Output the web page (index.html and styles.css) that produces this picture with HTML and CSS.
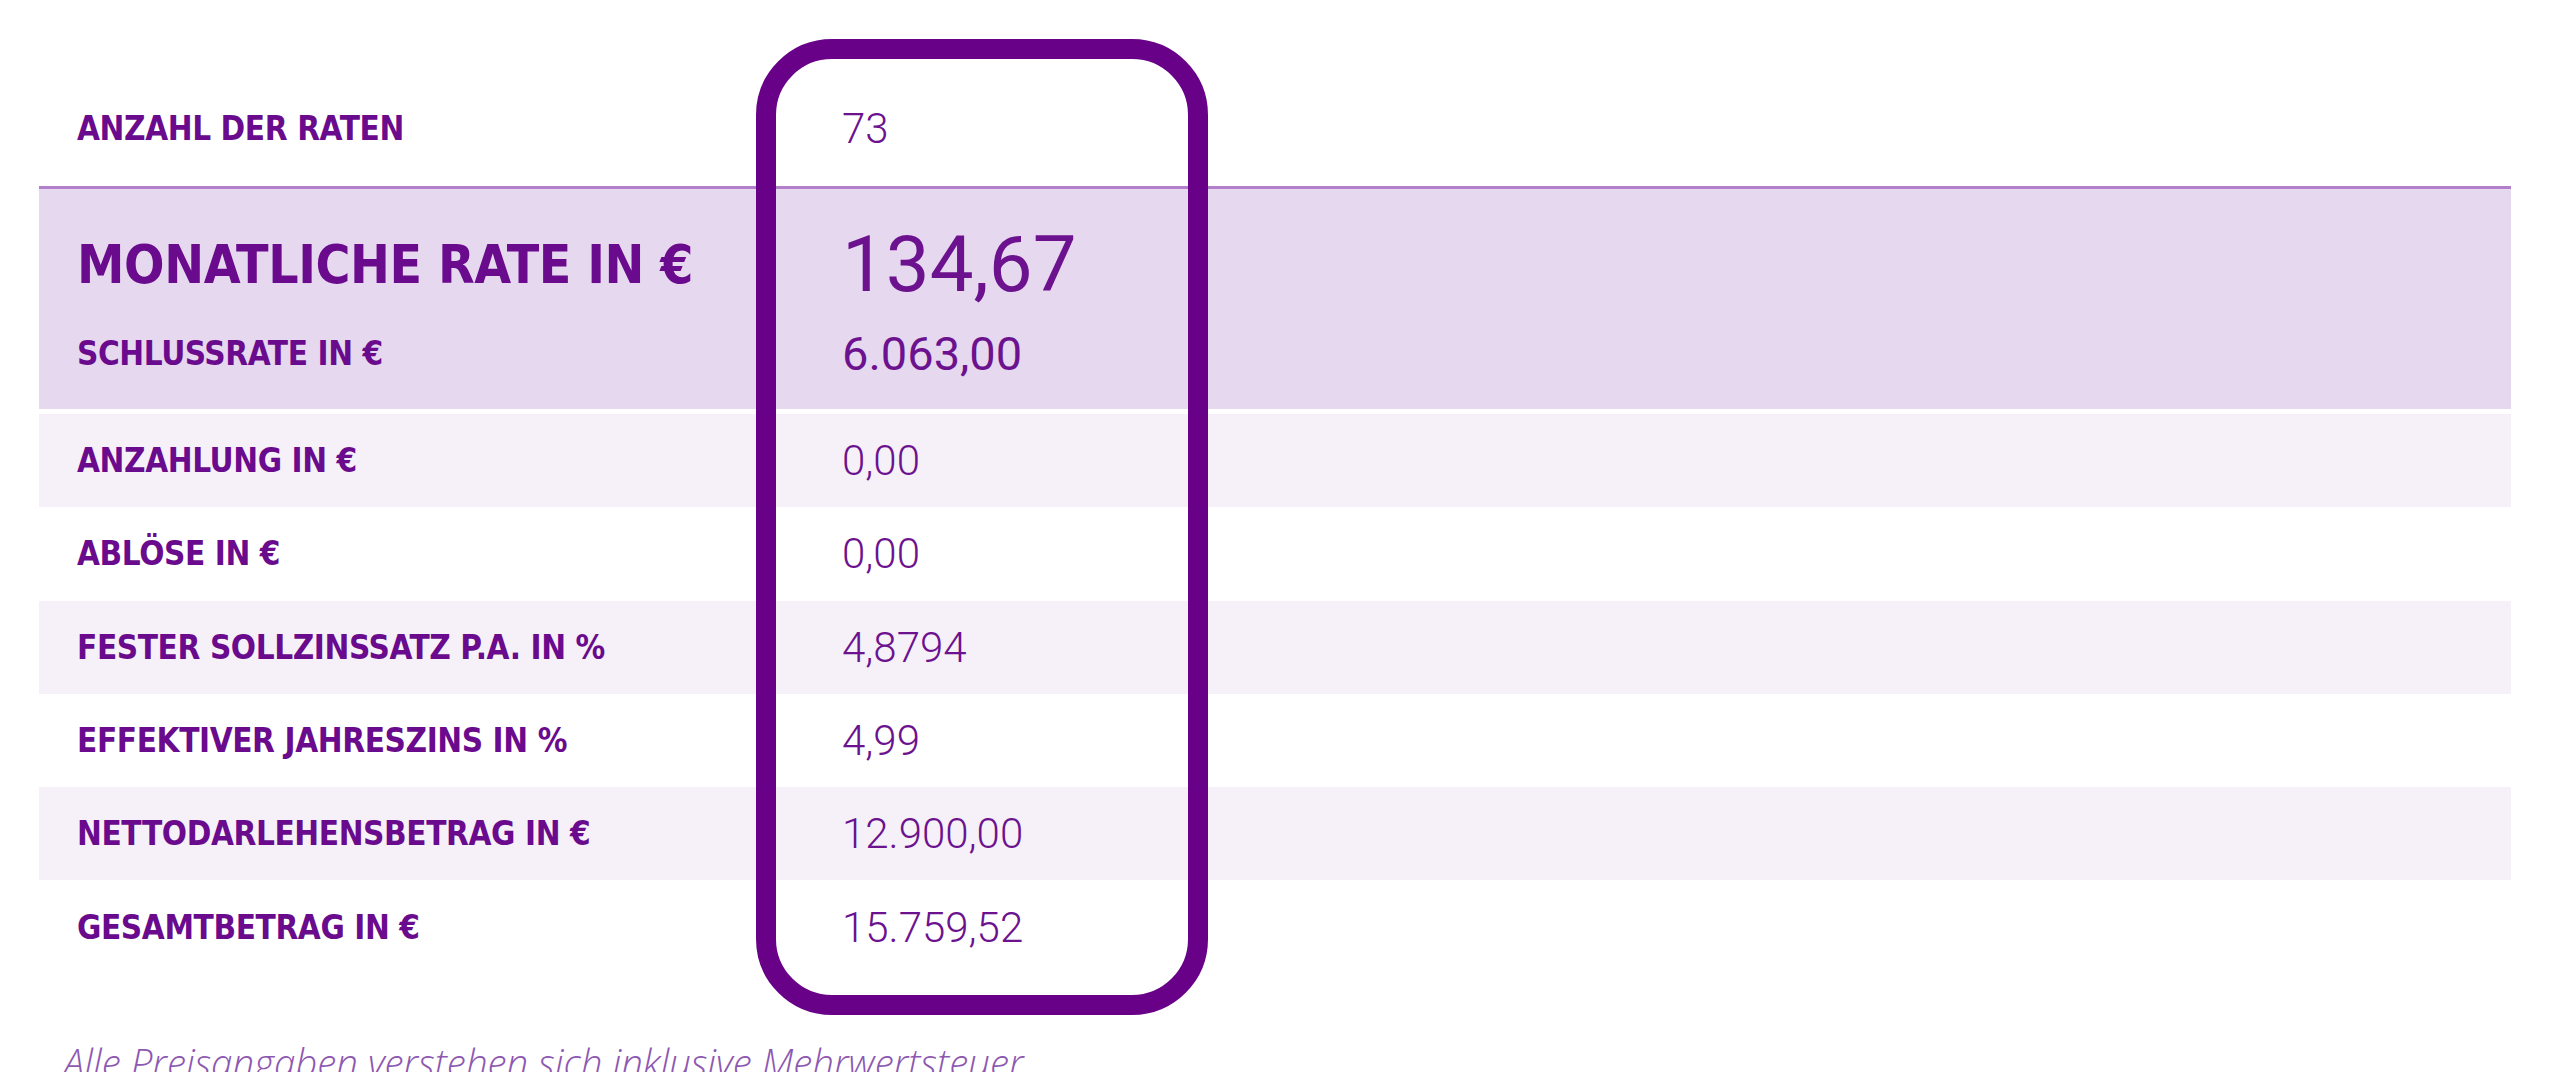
FILE: index.html
```html
<!DOCTYPE html>
<html lang="de">
<head>
<meta charset="utf-8">
<title>Finanzierung</title>
<link rel="stylesheet" href="styles.css">
</head>
<body>
<div class="calc">
  <div class="table">
    <div class="row row-first">
      <div class="label">ANZAHL DER RATEN</div>
      <div class="value">73</div>
    </div>
    <div class="highlight">
      <div class="hl-line">
        <div class="label label-big">MONATLICHE RATE IN €</div>
        <div class="value value-big">134,67</div>
      </div>
      <div class="hl-line">
        <div class="label">SCHLUSSRATE IN €</div>
        <div class="value value-mid">6.063,00</div>
      </div>
    </div>
    <div class="rows">
      <div class="row alt">
        <div class="label">ANZAHLUNG IN €</div>
        <div class="value">0,00</div>
      </div>
      <div class="row">
        <div class="label">ABLÖSE IN €</div>
        <div class="value">0,00</div>
      </div>
      <div class="row alt">
        <div class="label">FESTER SOLLZINSSATZ P.A. IN %</div>
        <div class="value">4,8794</div>
      </div>
      <div class="row">
        <div class="label">EFFEKTIVER JAHRESZINS IN %</div>
        <div class="value">4,99</div>
      </div>
      <div class="row alt">
        <div class="label">NETTODARLEHENSBETRAG IN €</div>
        <div class="value">12.900,00</div>
      </div>
      <div class="row">
        <div class="label">GESAMTBETRAG IN €</div>
        <div class="value">15.759,52</div>
      </div>
    </div>
  </div>
  <p class="note">Alle Preisangaben verstehen sich inklusive Mehrwertsteuer</p>
  <div class="focus-box"></div>
</div>
</body>
</html>
```

FILE: styles.css
```css
html, body {
  margin: 0;
  padding: 0;
  background: #ffffff;
}

body {
  width: 2560px;
  height: 1072px;
  overflow: hidden;
}

.calc {
  position: relative;
  padding: 70px 49px 0 39px;
}

.table {
  display: flex;
  flex-direction: column;
}

.row,
.hl-line {
  display: grid;
  grid-template-columns: 803px 1fr;
  align-items: center;
}

.row-first {
  height: 116px;
  border-bottom: 3px solid #b27fcb;
}

.highlight {
  background: #e6d8ef;
  height: 220px;
  display: flex;
  flex-direction: column;
  padding-top: 30px;
  box-sizing: border-box;
}

.hl-line:first-child {
  height: 86px;
}

.hl-line:last-child {
  height: 96px;
}

.rows {
  margin-top: 5px;
  display: flex;
  flex-direction: column;
}

.rows .row {
  height: 93.3px;
}

.row.alt {
  background: #f6f1f8;
}

.label {
  padding-left: 38px;
  font-family: "DejaVu Sans Condensed", "DejaVu Sans", sans-serif;
  font-stretch: condensed;
  font-weight: bold;
  font-size: 33px;
  letter-spacing: -0.4px;
  color: #6a0a8d;
}

.label-big {
  font-size: 53px;
}

.value {
  font-family: Roboto, "Liberation Sans", sans-serif;
  font-weight: 300;
  font-size: 42px;
  color: #6c128f;
}

.value-big {
  font-weight: 400;
  font-size: 78px;
}

.value-mid {
  font-weight: 400;
  font-size: 47px;
}

.note {
  margin: 62px 0 0 24px;
  font-family: "Open Sans", sans-serif;
  font-style: italic;
  font-weight: 300;
  font-size: 38.5px;
  color: #8d58b1;
  white-space: nowrap;
}

.focus-box {
  position: absolute;
  left: 756px;
  top: 39px;
  width: 452px;
  height: 976px;
  box-sizing: border-box;
  border: 20px solid #690088;
  border-radius: 76px;
  pointer-events: none;
}
```
